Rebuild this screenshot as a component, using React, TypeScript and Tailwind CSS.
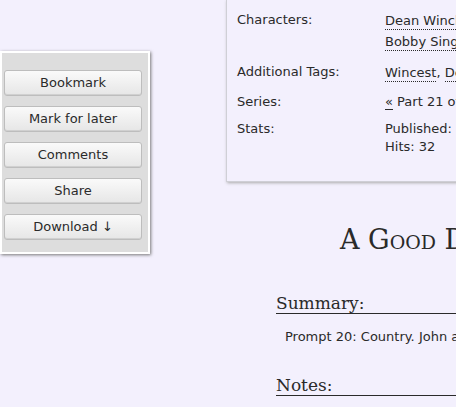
import React from "react";

const sans = { fontFamily: '"DejaVu Sans", "Lucida Grande", sans-serif' };
const serif = { fontFamily: '"DejaVu Serif", Georgia, serif' };

function Btn({ children }: { children: React.ReactNode }) {
  return (
    <div className="h-[26px] rounded-[3px] border border-[#bdbdbd] bg-gradient-to-b from-[#fafafa] to-[#e6e6e6] flex items-center justify-center text-[13px] text-[#2a2a2a] shadow-[inset_0_-1px_0_#d0d0d0]">
      {children}
    </div>
  );
}

function Tag({ children }: { children: React.ReactNode }) {
  return <span className="border-b border-dotted border-[#2a2a2a] pb-[1px]">{children}</span>;
}

export default function App() {
  return (
    <div className="w-[456px] h-[407px] overflow-hidden bg-[#f3f0fd] flex text-[#2a2a2a]" style={sans}>
      <div className="w-[150px] shrink-0 mt-[51px] self-start border-2 border-white bg-[#dddddd] shadow-[1px_1px_3px_#777] pl-[2px] pr-[6px] pt-[17px] pb-[12px] flex flex-col gap-[10px]">
        <Btn>Bookmark</Btn>
        <Btn>Mark for later</Btn>
        <Btn>Comments</Btn>
        <Btn>Share</Btn>
        <Btn>Download ↓</Btn>
      </div>
      <div className="ml-[76px] w-[420px] shrink-0 flex flex-col">
        <div className="h-[182px] border-l border-b border-[#cfcfd6] shadow-[1px_1px_3px_#aaa] bg-[#f3f0fd] pl-[10px] pt-[10px] text-[13px] leading-[18px]">
          <div className="grid grid-cols-[148px_1fr]">
            <div className="pt-[1px]">Characters:</div>
            <div className="flex flex-col gap-[3px] pt-[2px]">
              <span><Tag>Dean Winchester</Tag></span>
              <span><Tag>Bobby Singer</Tag></span>
            </div>
            <div className="mt-[12px]">Additional Tags:</div>
            <div className="mt-[13px]"><Tag>Wincest</Tag>, <Tag>Dean/Sam</Tag></div>
            <div className="mt-[11px]">Series:</div>
            <div className="mt-[11px]"><span className="border-b border-[#2a2a2a]">«</span> Part 21 of the Series</div>
            <div className="mt-[9px]">Stats:</div>
            <div className="mt-[9px] flex flex-col">
              <span>Published: 2013-05-20</span>
              <span>Hits: 32</span>
            </div>
          </div>
        </div>
        <div className="pl-[114px] mt-[42px] text-[27px] leading-[32px] whitespace-nowrap" style={{ ...serif, fontVariant: "small-caps" }}>
          A Good Day
        </div>
        <div className="ml-[50px] mt-[37px] border-b border-[#2a2a2a] text-[17px] leading-[20px]" style={serif}>
          Summary:
        </div>
        <div className="ml-[59px] mt-[14px] text-[13px] leading-[18px] whitespace-nowrap">
          Prompt 20: Country. John and the boys
        </div>
        <div className="ml-[50px] mt-[29px] border-b border-[#2a2a2a] text-[17px] leading-[20px]" style={serif}>
          Notes:
        </div>
      </div>
    </div>
  );
}
